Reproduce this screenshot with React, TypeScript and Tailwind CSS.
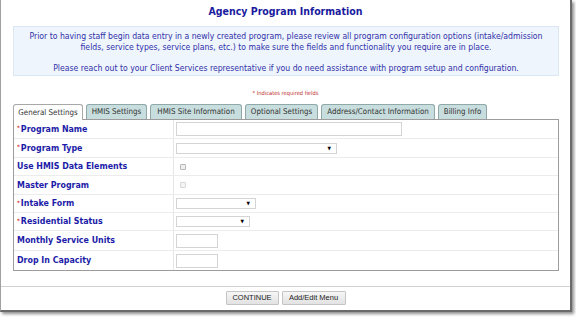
import React from "react";

const tabs = [
  { label: "General Settings", active: true, w: "w-[70px]" },
  { label: "HMIS Settings", active: false, w: "w-[61px]" },
  { label: "HMIS Site Information", active: false, w: "w-[92px]" },
  { label: "Optional Settings", active: false, w: "w-[73px]" },
  { label: "Address/Contact Information", active: false, w: "w-[114px]" },
  { label: "Billing Info", active: false, w: "w-[49px]" },
];

function Req() {
  return <span className="text-[#d04040] text-[6px] mr-[1px] relative -top-[1px]">*</span>;
}

function TextBox({ w }: { w: string }) {
  return <div className={`${w} h-[14px] border border-[#d4d4d4] bg-white`} />;
}

function SelectBox({ w }: { w: string }) {
  return (
    <div className={`${w} h-[11px] border border-[#d4d4d4] bg-white flex items-center justify-end pr-[5px]`}>
      <span className="text-[5px] leading-none text-black">▼</span>
    </div>
  );
}

function Check({ disabled }: { disabled?: boolean }) {
  return (
    <div
      className={`ml-[4px] w-[6px] h-[6px] rounded-[1px] border ${
        disabled ? "border-[#d8d8d8] bg-[#f4f4f4]" : "border-[#b8b8b8] bg-[#eeeeee]"
      }`}
    />
  );
}

const rows: { label: string; req?: boolean; h: string; field: React.ReactNode }[] = [
  { label: "Program Name", req: true, h: "h-[19px]", field: <TextBox w="w-[226px]" /> },
  { label: "Program Type", req: true, h: "h-[19px]", field: <SelectBox w="w-[161px]" /> },
  { label: "Use HMIS Data Elements", h: "h-[18px]", field: <Check /> },
  { label: "Master Program", h: "h-[19px]", field: <Check disabled /> },
  { label: "Intake Form", req: true, h: "h-[18px]", field: <SelectBox w="w-[80px]" /> },
  { label: "Residential Status", req: true, h: "h-[18px]", field: <SelectBox w="w-[74px]" /> },
  { label: "Monthly Service Units", h: "h-[20px]", field: <TextBox w="w-[42px]" /> },
  { label: "Drop In Capacity", h: "h-[19px]", field: <TextBox w="w-[42px]" /> },
];

export default function App() {
  return (
    <div className="w-[576px] h-[317px] bg-white overflow-hidden font-['DejaVu_Sans_Condensed','DejaVu_Sans',sans-serif]">
      <div className="w-[572px] h-[312px] border-l border-r-2 border-b-2 border-l-[#a0a0a0] border-r-[#6a6a6a] border-b-[#6a6a6a] shadow-[2px_2px_3px_rgba(0,0,0,0.45)] flex flex-col">
        <div className="h-[22px] flex items-center justify-center">
          <span className="text-[10.5px] font-bold text-[#1a1a9e] leading-none">Agency Program Information</span>
        </div>
        <div className="mt-[4px] ml-[12px] w-[546px] h-[50px] bg-[#eef5fc] border border-[#dbe7f3] pt-[4px] text-center text-[8.6px] leading-[10.5px] text-[#3030aa]">
          <p>
            Prior to having staff begin data entry in a newly created program, please review all program configuration options (intake/admission
            <br />
            fields, service types, service plans, etc.) to make sure the fields and functionality you require are in place.
          </p>
          <p className="mt-[10.5px]">
            Please reach out to your Client Services representative if you do need assistance with program setup and configuration.
          </p>
        </div>
        <div className="mt-[14px] h-[8px] flex items-center justify-center text-[5.7px] leading-none text-[#c03030]">
          * Indicates required fields
        </div>
        <div className="mt-[6px] ml-[12px] flex gap-[3px] h-[15px] items-end">
          {tabs.map((t) => (
            <div
              key={t.label}
              className={`${t.w} h-[15px] rounded-t-[3px] border border-b-0 flex items-center justify-center text-[7.9px] leading-none ${
                t.active
                  ? "bg-white border-[#a8a8a8] text-[#333] relative top-[1px] h-[16px]"
                  : "bg-[#c8dede] border-[#8fa8a8] text-[#333]"
              }`}
            >
              {t.label}
            </div>
          ))}
        </div>
        <div className="ml-[12px] w-[546px] border border-[#9c9c9c] bg-white">
          {rows.map((r, i) => (
            <div
              key={r.label}
              className={`flex ${r.h} ${i < rows.length - 1 ? "border-b border-[#ececec]" : ""}`}
            >
              <div className="w-[160px] border-r border-[#e6e6e6] flex items-center pl-[3px] text-[8.8px] font-bold text-[#1c1ca8] leading-none">
                {r.req && <Req />}
                {r.label}
              </div>
              <div className="flex-1 flex items-center pl-[2px]">{r.field}</div>
            </div>
          ))}
        </div>
        <div className="mt-[15px] h-px bg-[#d0d0d0]" />
        <div className="mt-[4px] flex justify-center gap-[3px]">
          <div className="w-[53px] h-[14px] border border-[#c4c4c4] bg-gradient-to-b from-[#f6f6f6] to-[#e2e2e2] rounded-[1px] flex items-center justify-center text-[7.5px] leading-none text-[#222] font-['Liberation_Sans',sans-serif]">
            CONTINUE
          </div>
          <div className="w-[64px] h-[14px] border border-[#c4c4c4] bg-gradient-to-b from-[#f6f6f6] to-[#e2e2e2] rounded-[1px] flex items-center justify-center text-[7.5px] leading-none text-[#222] font-['Liberation_Sans',sans-serif]">
            Add/Edit Menu
          </div>
        </div>
      </div>
    </div>
  );
}
